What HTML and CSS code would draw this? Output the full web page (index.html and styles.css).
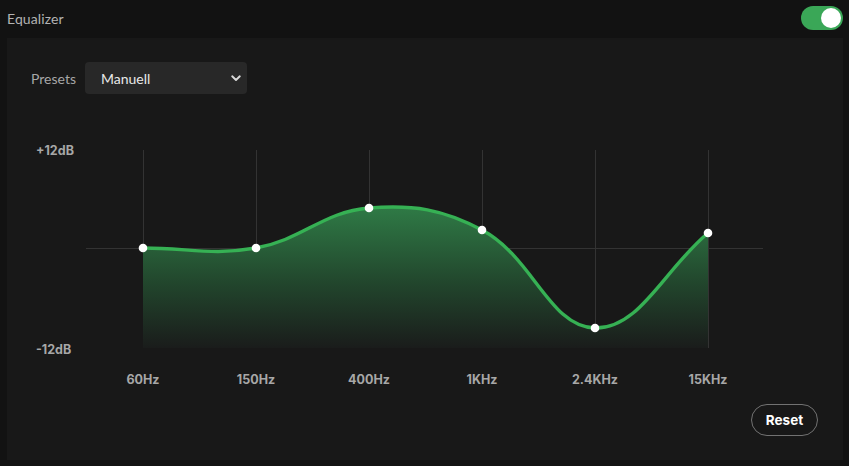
FILE: index.html
```html
<!DOCTYPE html>
<html lang="en">
<head>
<meta charset="utf-8">
<title>Equalizer</title>
<link rel="stylesheet" href="styles.css">
</head>
<body>
<div class="page">
  <header class="header">
    <span class="title">Equalizer</span>
    <span class="toggle" role="switch" aria-checked="true"><span class="knob"></span></span>
  </header>
  <section class="panel">
    <div class="presets">
      <span class="presets-label">Presets</span>
      <div class="select">
        <span class="select-value">Manuell</span>
        <svg class="chevron" width="10" height="7" viewBox="0 0 10 7"><path d="M1.2 1.3 L5 5 L8.8 1.3" fill="none" stroke="#d9d9d9" stroke-width="1.9" stroke-linecap="round" stroke-linejoin="round"/></svg>
      </div>
    </div>
    <svg class="chart" width="787" height="300" viewBox="0 0 787 300">
      <defs>
        <linearGradient id="fillGrad" gradientUnits="userSpaceOnUse" x1="0" y1="200" x2="0" y2="348">
          <stop offset="0" stop-color="#307f48"/>
          <stop offset="0.55" stop-color="#22472d"/>
          <stop offset="1" stop-color="#1a1c1b"/>
        </linearGradient>
      </defs>
      <g transform="translate(-31,-94)">
        <g stroke="#333333" stroke-width="1">
          <line x1="86" y1="248.5" x2="763" y2="248.5"/>
          <line x1="143.5" y1="150" x2="143.5" y2="348"/>
          <line x1="256.5" y1="150" x2="256.5" y2="348"/>
          <line x1="369.5" y1="150" x2="369.5" y2="348"/>
          <line x1="482.5" y1="150" x2="482.5" y2="348"/>
          <line x1="595.5" y1="150" x2="595.5" y2="348"/>
          <line x1="708.5" y1="150" x2="708.5" y2="348"/>
        </g>
        <path d="M143,248 C188.2,248 212.13,255.76 256,248 C302.53,239.76 322.89,211.67 369,208 C413.29,204.47 442.68,209.12 482,230 C533.08,257.12 549.5,327.4 595,328 C639.91,328.6 662.8,271 708,233 L708,348 L143,348 Z" fill="url(#fillGrad)"/>
        <path d="M143,248 C188.2,248 212.13,255.76 256,248 C302.53,239.76 322.89,211.67 369,208 C413.29,204.47 442.68,209.12 482,230 C533.08,257.12 549.5,327.4 595,328 C639.91,328.6 662.8,271 708,233" fill="none" stroke="#36b154" stroke-width="3.4" stroke-linecap="round"/>
        <g fill="#ffffff">
          <circle cx="143" cy="248" r="4.3"/>
          <circle cx="256" cy="248" r="4.3"/>
          <circle cx="369" cy="208" r="4.3"/>
          <circle cx="482" cy="230" r="4.3"/>
          <circle cx="595" cy="328" r="4.3"/>
          <circle cx="708" cy="233" r="4.3"/>
        </g>
        <g class="axis">
          <text x="36" y="154.5">+12dB</text>
          <text x="36" y="353.5">-12dB</text>
        </g>
        <g class="axis" text-anchor="middle">
          <text x="143" y="384">60Hz</text>
          <text x="256" y="384">150Hz</text>
          <text x="369" y="384">400Hz</text>
          <text x="482" y="384">1KHz</text>
          <text x="595" y="384">2.4KHz</text>
          <text x="708" y="384">15KHz</text>
        </g>
      </g>
    </svg>
    <div class="actions">
      <button class="reset" type="button">Reset</button>
    </div>
  </section>
</div>
</body>
</html>
```

FILE: styles.css
```css
html, body {
  margin: 0;
  padding: 0;
  background: #121212;
  font-family: "Lato", "Inter", "Liberation Sans", sans-serif;
}

.page {
  width: 849px;
  height: 466px;
  display: flex;
  flex-direction: column;
}

.header {
  height: 36px;
  margin-bottom: 2px;
  padding: 0 6px 0 7px;
  display: flex;
  align-items: center;
  justify-content: space-between;
}

.title {
  color: #b3b3b3;
  font-size: 14px;
  letter-spacing: 0.1px;
}

.toggle {
  width: 42px;
  height: 24px;
  border-radius: 12px;
  background: #3aa757;
  display: flex;
  align-items: center;
  justify-content: flex-end;
  padding: 0 2px;
  box-sizing: border-box;
}

.knob {
  width: 20px;
  height: 20px;
  border-radius: 50%;
  background: #ffffff;
}

.panel {
  margin: 0 6px 0 7px;
  background: #181818;
  padding: 24px 25px 24px 24px;
  display: flex;
  flex-direction: column;
}

.presets {
  display: flex;
  align-items: center;
  gap: 9px;
  height: 32px;
}

.presets-label {
  color: #a7a7a7;
  font-size: 14px;
}

.select {
  width: 162px;
  height: 32px;
  box-sizing: border-box;
  background: #282828;
  border-radius: 4px;
  display: flex;
  align-items: center;
  justify-content: space-between;
  padding: 0 6px 0 16px;
}

.select-value {
  color: #e8e8e8;
  font-size: 14px;
}

.chart {
  display: block;
}

.axis text {
  fill: #a7a7a7;
  font-family: "Inter", "Lato", "Liberation Sans", sans-serif;
  font-weight: 700;
  font-size: 12.5px;
}

.actions {
  display: flex;
  justify-content: flex-end;
  margin-top: 10px;
}

.reset {
  width: 67px;
  height: 32px;
  border-radius: 16px;
  border: 1px solid #727272;
  background: transparent;
  color: #ffffff;
  font-family: "Inter", "Lato", "Liberation Sans", sans-serif;
  font-weight: 700;
  font-size: 13.5px;
  padding: 0;
  cursor: pointer;
}
```
